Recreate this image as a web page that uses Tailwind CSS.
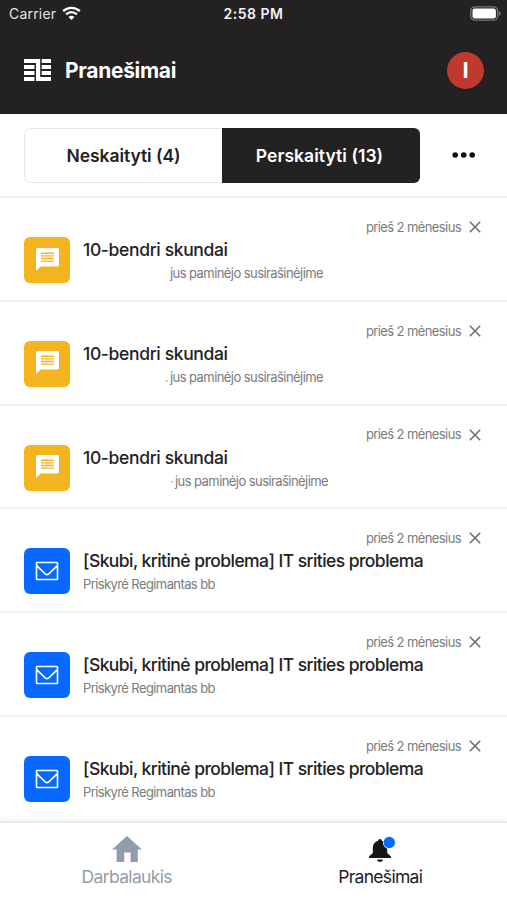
<!DOCTYPE html>
<html lang="lt">
<head>
<meta charset="utf-8">
<title>Pranešimai</title>
<script src="https://cdn.jsdelivr.net/npm/@tailwindcss/browser@4"></script>
</head>
<body class="w-[507px] h-[900px] overflow-hidden bg-white flex flex-col font-['Inter','Liberation_Sans',sans-serif] text-[#232122]">
<svg class="hidden">
  <symbol id="chat" viewBox="0 0 23 23"><path fill="#fff" d="M1.500 0H21.500Q23 0 23 1.500V17Q23 18.500 21.500 18.500H4.500L0 23V1.500Q0 0 1.500 0z"/><path stroke="#f4b41f" stroke-width="1.400" d="M5 5.300h13M5 7.900h13M5 10.500h13M5 13.100h13"/></symbol>
  <symbol id="mail" viewBox="0 0 24 20"><path fill="none" stroke="#fff" stroke-width="1.600" stroke-linejoin="round" d="M2.200 1.500h19.600a.7.700 0 0 1 .7.700v15.600a.7.700 0 0 1-.7.700h-19.600a.7.700 0 0 1-.7-.7v-15.600a.7.700 0 0 1 .7-.7zM1.700 4.700l8.500 8.200q1.800 1.400 3.600 0l8.500-8.200"/></symbol>
  <symbol id="close" viewBox="0 0 12 12"><path stroke="#6a6a6a" stroke-width="1.500" d="M.8.800l10.400 10.400M11.200.8L.8 11.200"/></symbol>
</svg>
<header class="h-[114px] shrink-0 bg-[#232122] text-white">
  <div class="h-[28px] grid grid-cols-3 items-center pl-[9px] pr-[6px]">
    <div class="flex items-center gap-[6px] text-[14px] text-[#e4e4e4] -mt-[2px]"><span class="tracking-[0.200px]">Carrier</span>
      <svg class="w-[19px] h-[14px]" viewBox="0 0 19 14"><g fill="none" stroke="#fff" stroke-width="2.400"><path d="M1.200 5.200a12 12 0 0 1 16.600 0"/><path d="M4.100 8.300a7.700 7.700 0 0 1 10.800 0"/></g><path fill="#fff" d="M9.500 14L6.500 11a4.200 4.200 0 0 1 6 0z"/></svg>
    </div>
    <div class="text-center text-[14px] font-semibold tracking-[0.500px] whitespace-nowrap text-[#f2f2f2] -mt-[2px] -ml-[3px]">2:58 PM</div>
    <svg class="justify-self-end w-[31px] h-[15px] -mt-[2px]" viewBox="0 0 31 15"><rect x=".8" y=".8" width="26.800" height="13.400" rx="4" fill="none" stroke="#777" stroke-width="1.300"/><rect x="2.500" y="2.500" width="23.400" height="10" rx="2.300" fill="#fff"/><path fill="#777" d="M28.700 5q2 .8 2 2.500t-2 2.500z"/></svg>
  </div>
  <div class="h-[84px] flex items-center pl-[24px] pr-[23px]">
    <svg class="w-[27px] h-[22px] -mt-[1px]" viewBox="0 0 27 22"><g fill="#fff"><path d="M0 0h16.200v18h10.800v4H12V4H0z"/><path d="M17.700 0h9.300v4h-9.300zM17.700 6h9.300v4h-9.300zM17.700 12h9.300v4h-9.300zM0 6h10.500v4H0zM0 12h10.500v4H0zM0 18h10.500v4H0z"/></g></svg>
    <h1 class="ml-[14px] mt-[2px] text-[21px] font-bold tracking-[-0.300px]">Pranešimai</h1>
    <div class="ml-auto size-[37px] rounded-full bg-[#c0392f] flex items-center justify-center text-[22px] font-bold">I</div>
  </div>
</header>
<div class="h-[84px] shrink-0 border-b-2 border-[#eff1f2] flex items-start pt-[14px] pl-[24px]">
  <div class="flex w-[396px] h-[55px] text-[17.500px] font-semibold">
    <div class="w-[198px] rounded-l-[7px] border border-r-0 border-[#e3e8e8] flex items-center justify-center pt-[2px] tracking-[-0.050px]">Neskaityti (4)</div>
    <div class="w-[198px] rounded-r-[6px] bg-[#232122] text-white flex items-center justify-center pt-[2px] pr-[3px] tracking-[0.050px]">Perskaityti (13)</div>
  </div>
  <svg class="ml-[32px] mt-[24px] w-[24px] h-[6px]" viewBox="0 0 24 6"><g fill="#111"><circle cx="3.200" cy="3" r="2.800"/><circle cx="11.700" cy="3" r="2.800"/><circle cx="20.200" cy="3" r="2.800"/></g></svg>
</div>
<main id="list" class="h-[623px] shrink-0"></main>
<nav class="h-[79px] shrink-0 border-t-2 border-[#e9ebed] bg-white shadow-[0_-2px_5px_rgba(0,0,0,0.05)] grid grid-cols-2 text-[17.500px]">
  <div class="flex flex-col items-center pt-[13px] text-[#929daa]">
    <svg class="w-[30px] h-[26px]" viewBox="0 0 30 26"><path fill="#929daa" d="M15 0L30 13.500H25.800V26H18.600V16.500H12.200V26H4.600V13.500H0z"/></svg>
    <span class="mt-[2px] leading-[26px] tracking-[-0.650px]">Darbalaukis</span>
  </div>
  <div class="flex flex-col items-center pt-[13px] text-[#232122]">
    <svg class="w-[30px] h-[26px]" viewBox="0 0 30 26"><path fill="#161616" d="M15 3c1.200 0 1.800.8 1.900 1.800 3.500 1 5.300 3.700 5.300 7.200v5l3.800 3.500V22H4v-1.500L7.800 17v-5c0-3.500 1.800-6.200 5.300-7.200C13.200 3.800 13.800 3 15 3zM12.200 23.500h5.600a2.800 2.300 0 0 1-5.600 0z"/><circle cx="24.300" cy="6.500" r="6.400" fill="#fff"/><circle cx="24.300" cy="6.500" r="5.700" fill="#0769ff"/></svg>
    <span class="mt-[2px] leading-[26px] tracking-[-0.700px]">Pranešimai</span>
  </div>
</nav>
<script>
const items = [
  {chat: 1, title: '10-bendri skundai', sub: 'jus paminėjo susirašinėjime', pad: 87, mark: ''},
  {chat: 1, title: '10-bendri skundai', sub: 'jus paminėjo susirašinėjime', pad: 82, mark: '.'},
  {chat: 1, title: '10-bendri skundai', sub: 'jus paminėjo susirašinėjime', pad: 87, mark: '·'},
  ...Array.from({length: 3}, () => ({title: '[Skubi, kritinė problema] IT srities problema', sub: 'Priskyrė Regimantas bb', pad: 0, mark: ''}))
];
document.getElementById('list').innerHTML = items.map((n, i) => `
<article class="h-[103.830px] pt-[19px] pl-[24px] pr-[26px] ${i < 5 ? 'border-b-2 border-[#eff1f2]' : ''}">
  <div class="h-[20px] flex items-center justify-end gap-[8px] text-[13px] tracking-[-0.600px] text-[#7b7b7b]"><span class="mt-px">prieš 2 mėnesius</span><svg class="size-[12px]"><use href="#close"/></svg></div>
  <div class="flex">
    <div class="w-[46px] h-[46px] rounded-[6px] flex items-center justify-center ${n.chat ? 'bg-[#f4b41f]' : 'bg-[#0769ff]'}">${n.chat ? '<svg class="size-[23px] -mt-[2px]"><use href="#chat"/></svg>' : '<svg class="w-[24px] h-[20px]"><use href="#mail"/></svg>'}</div>
    <div class="ml-[13px] whitespace-nowrap">
      <div class="h-[26px] leading-[26px] text-[17.500px] font-medium ${n.chat ? 'tracking-[-0.350px]' : 'tracking-[-0.560px]'}">${n.title}</div>
      <div class="h-[20px] leading-[20px] text-[13px] ${n.chat ? 'tracking-[-0.570px]' : 'tracking-[-0.600px]'} text-[#7b7b7b] flex" style="padding-left:${n.pad}px">${n.mark ? `<span class="w-[5px] text-[#aaa]">${n.mark}</span>` : ''}<span>${n.sub}</span></div>
    </div>
  </div>
</article>`).join('');
</script>
</body>
</html>
